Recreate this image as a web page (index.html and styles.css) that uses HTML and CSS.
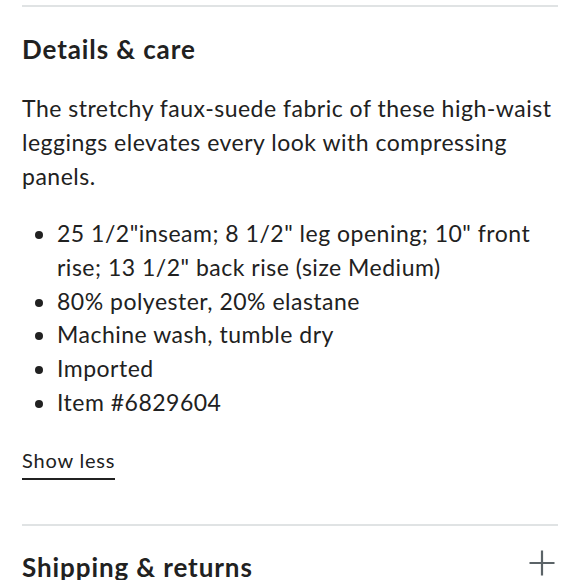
FILE: index.html
```html
<!DOCTYPE html>
<html lang="en">
<head>
<meta charset="utf-8">
<link rel="stylesheet" href="styles.css">
</head>
<body>
<div class="page">
  <section class="panel">
    <h2 class="panel-title">Details &amp; care</h2>
    <p class="desc">The stretchy faux-suede fabric of these high-waist leggings elevates every look with compressing panels.</p>
    <ul class="facts">
      <li>25 1/2"inseam; 8 1/2" leg opening; 10" front rise; 13 1/2" back rise (size Medium)</li>
      <li>80% polyester, 20% elastane</li>
      <li>Machine wash, tumble dry</li>
      <li>Imported</li>
      <li>Item #6829604</li>
    </ul>
    <a class="toggle" href="#">Show less</a>
  </section>
  <section class="panel collapsed">
    <div class="panel-head">
      <h2 class="panel-title">Shipping &amp; returns</h2>
      <svg class="plus" width="28" height="28" viewBox="0 0 28 28" aria-hidden="true">
        <path d="M14 1.5V26.5M1.5 14H26.5" stroke="#5b6367" stroke-width="2.2" fill="none"/>
      </svg>
    </div>
  </section>
</div>
</body>
</html>
```

FILE: styles.css
```css
html, body {
  margin: 0;
  padding: 0;
  background: #ffffff;
}
body {
  font-family: Lato, "Noto Sans", sans-serif;
  color: #212121;
}
.page {
  padding: 0 22px;
}
.panel {
  border-top: 2px solid #e0e3e4;
  margin-top: 5px;
}
.panel-title {
  margin: 0;
  font-size: 26px;
  font-weight: 700;
  letter-spacing: 0.9px;
  line-height: 32px;
  padding-top: 26px;
}
.desc {
  margin: 0;
  padding-top: 26px;
  font-size: 23px;
  letter-spacing: 0.5px;
  line-height: 34px;
}
.facts {
  margin: 0;
  padding: 24px 0 0 35px;
  font-size: 23px;
  letter-spacing: 0.5px;
  line-height: 33.8px;
}
.toggle {
  display: block;
  width: fit-content;
  margin-top: 28px;
  font-size: 20px;
  letter-spacing: 0.8px;
  line-height: 24px;
  color: #212121;
  text-decoration: none;
  border-bottom: 2px solid #212121;
  padding-bottom: 6px;
}
.collapsed {
  margin-top: 44px;
}
.panel-head {
  display: flex;
  justify-content: space-between;
  align-items: flex-start;
}
.collapsed .panel-title {
  padding-top: 25px;
}
.plus {
  flex: none;
  margin-top: 23px;
  margin-right: 2px;
}
```
